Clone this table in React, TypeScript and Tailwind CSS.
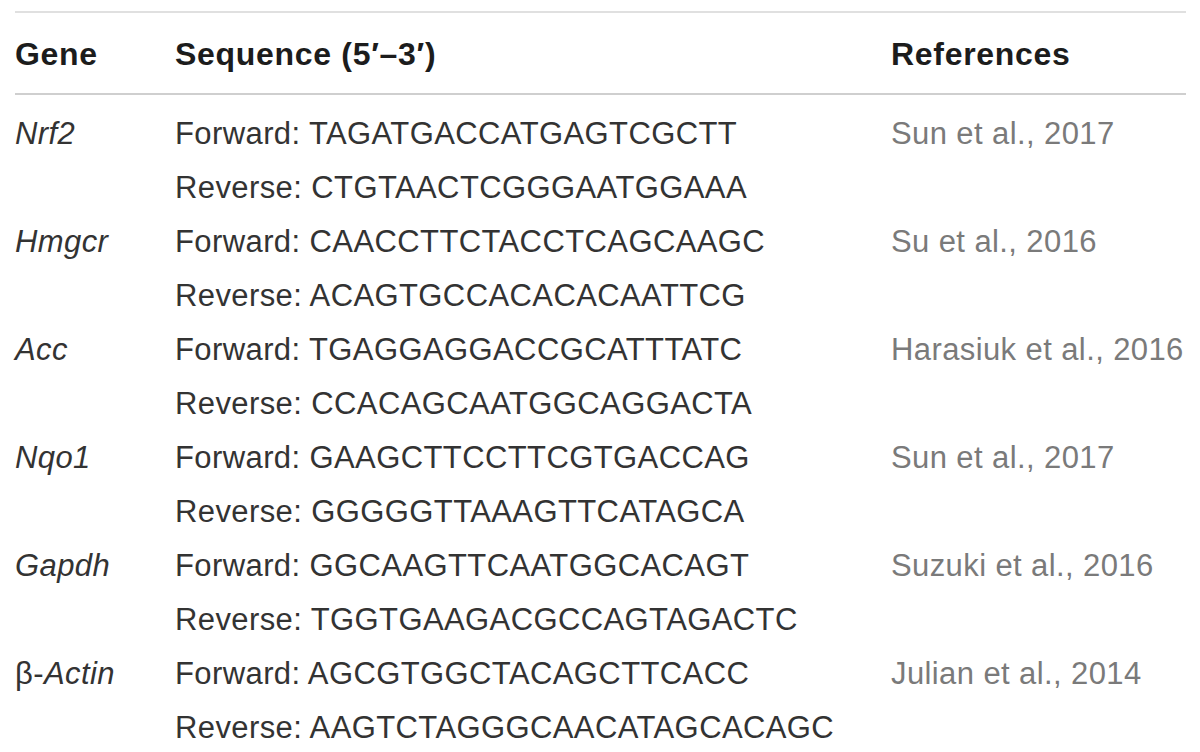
const rows = [
  { gene: "Nrf2", fwd: "TAGATGACCATGAGTCGCTT", rev: "CTGTAACTCGGGAATGGAAA", ref: "Sun et al., 2017" },
  { gene: "Hmgcr", fwd: "CAACCTTCTACCTCAGCAAGC", rev: "ACAGTGCCACACACAATTCG", ref: "Su et al., 2016" },
  { gene: "Acc", fwd: "TGAGGAGGACCGCATTTATC", rev: "CCACAGCAATGGCAGGACTA", ref: "Harasiuk et al., 2016" },
  { gene: "Nqo1", fwd: "GAAGCTTCCTTCGTGACCAG", rev: "GGGGGTTAAAGTTCATAGCA", ref: "Sun et al., 2017" },
  { gene: "Gapdh", fwd: "GGCAAGTTCAATGGCACAGT", rev: "TGGTGAAGACGCCAGTAGACTC", ref: "Suzuki et al., 2016" },
  { gene: "Actin", beta: true, fwd: "AGCGTGGCTACAGCTTCACC", rev: "AAGTCTAGGGCAACATAGCACAGC", ref: "Julian et al., 2014" },
];

export default function App() {
  return (
    <div className="min-h-screen bg-white pt-[11px] pl-[15px] font-['Liberation_Sans',Arial,sans-serif]">
      <div className="w-[1171px]">
        {/* Header */}
        <div className="grid grid-cols-[160px_716px_1fr] border-t-2 border-b-2 border-t-[#e0e0e0] border-b-[#cfcfcf] pt-[21px] pb-[19px] text-[32px] leading-[40px] font-bold tracking-[0.7px] text-[#1c1c1c]">
          <div>Gene</div>
          <div>Sequence (5′–3′)</div>
          <div>References</div>
        </div>

        {/* Body */}
        <div className="pt-[12px] text-[31px] leading-[54px] tracking-[0.4px] text-[#333]">
          {rows.map((r) => (
            <div key={r.gene} className="grid grid-cols-[160px_716px_1fr]">
              <div>
                {r.beta && <span>β-</span>}
                <span className="italic">{r.gene}</span>
              </div>
              <div>
                <div>Forward: {r.fwd}</div>
                <div>Reverse: {r.rev}</div>
              </div>
              <div className="text-[#7a7a7a]">{r.ref}</div>
            </div>
          ))}
        </div>
      </div>
    </div>
  );
}
